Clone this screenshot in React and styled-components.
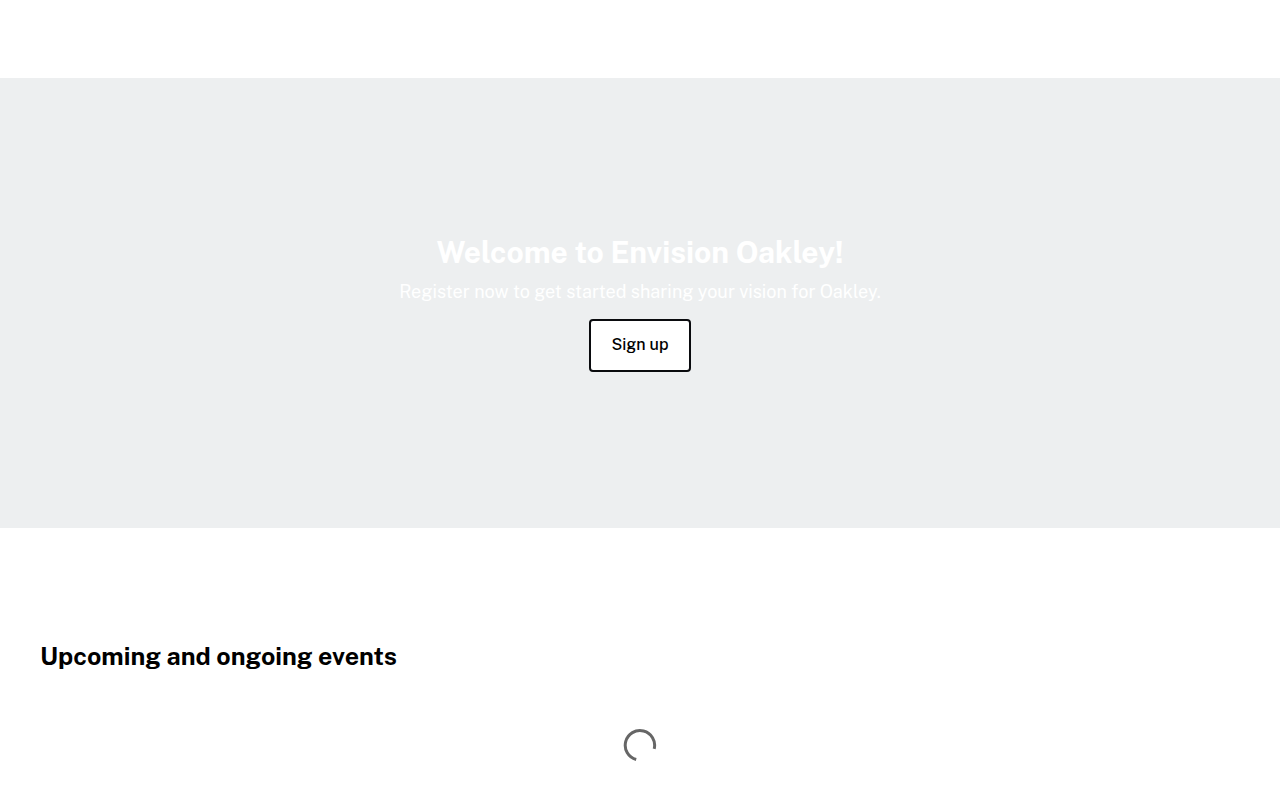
import styled, { createGlobalStyle } from "styled-components";

const GlobalStyle = createGlobalStyle`
  * {
    box-sizing: border-box;
  }

  body {
    margin: 0;
    background: #fff;
    color: #000;
    font-family: "Public Sans", Inter, "Liberation Sans", sans-serif;
  }
`;

const Header = styled.header`
  height: 78px;
  background: #fff;
`;

const Banner = styled.section`
  display: flex;
  flex-direction: column;
  align-items: center;
  justify-content: center;
  min-height: 450px;
  padding: 20px 20px 22px;
  background: #edeff0;
  color: #fff;
  text-align: center;
`;

const Title = styled.h1`
  margin: 0 0 9px;
  font-size: 30px;
  font-weight: 700;
  line-height: 38px;
`;

const Subtitle = styled.p`
  margin: 0 0 15px;
  font-size: 18px;
  line-height: 24px;
`;

const SignUpButton = styled.button`
  padding: 12px 21px 13px;
  border: 2px solid #0a0b0e;
  border-radius: 4px;
  background: #fff;
  color: #000;
  font-family: inherit;
  font-size: 16px;
  font-weight: 500;
  line-height: 24px;
  cursor: pointer;
`;

const Events = styled.section`
  max-width: 1200px;
  margin: 0 auto;
  padding: 112px 0 40px;
`;

const EventsTitle = styled.h2`
  margin: 0;
  font-size: 25px;
  font-weight: 700;
  line-height: 32px;
`;

const Loader = styled.div`
  display: flex;
  justify-content: center;
  margin-top: 56px;
`;

const Spinner = styled.svg`
  width: 34px;
  height: 34px;
`;

function App() {
  return (
    <>
      <GlobalStyle />
      <Header />
      <main>
        <Banner>
          <Title>Welcome to Envision Oakley!</Title>
          <Subtitle>
            Register now to get started sharing your vision for Oakley.
          </Subtitle>
          <SignUpButton type="button">Sign up</SignUpButton>
        </Banner>
        <Events>
          <EventsTitle>Upcoming and ongoing events</EventsTitle>
          <Loader role="status" aria-label="Loading">
            <Spinner viewBox="0 0 34 34" fill="none">
              <path
                d="M31.2 20.8A14.7 14.7 0 1 0 13.2 31.5"
                stroke="#666"
                strokeWidth="3"
              />
            </Spinner>
          </Loader>
        </Events>
      </main>
    </>
  );
}

export default App;
